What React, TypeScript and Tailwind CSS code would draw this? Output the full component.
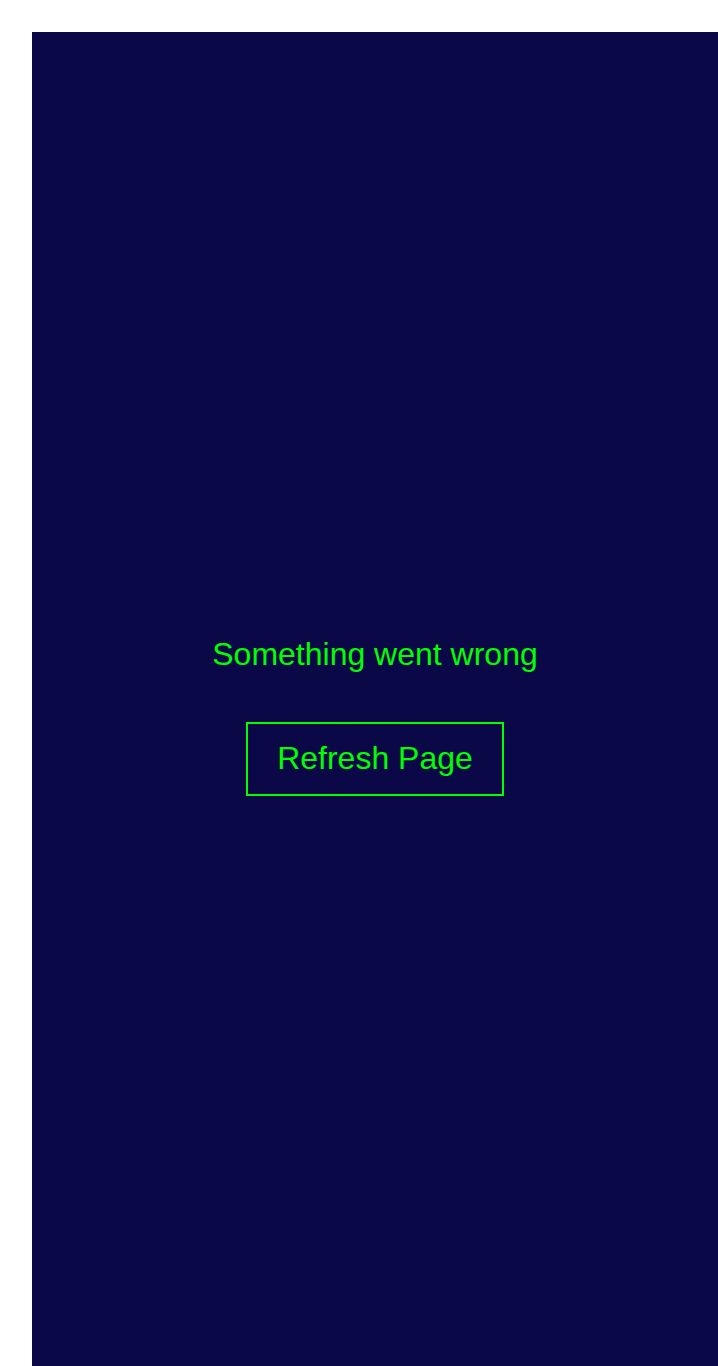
export default function App() {
  return (
    <div className="pl-8 pt-8 bg-white" style={{ fontFamily: '"Liberation Sans", Arial, sans-serif' }}>
      <div className="h-screen pt-[2px] bg-[#0a0847] flex flex-col items-center justify-center">
        <div className="text-[32px] leading-[36px] text-[#00ff00]">Something went wrong</div>
        <button className="mt-[50px] border-2 border-[#00ff00] px-[29px] pt-[16px] pb-[18px] text-[32px] leading-[36px] text-[#00ff00] bg-transparent">
          Refresh Page
        </button>
      </div>
    </div>
  );
}
